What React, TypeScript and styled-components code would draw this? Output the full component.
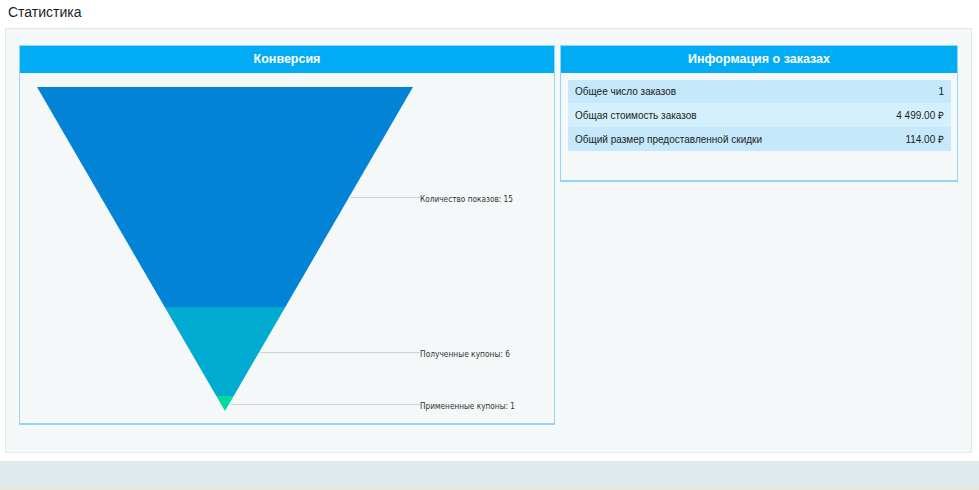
import React from 'react';
import styled, { createGlobalStyle } from 'styled-components';

const GlobalStyle = createGlobalStyle`
  html, body {
    margin: 0;
    padding: 0;
    background: #ffffff;
  }
  body {
    font-family: "Liberation Sans", Arial, sans-serif;
    color: #222;
  }
`;

const Page = styled.div`
  width: 979px;
  height: 490px;
  display: flex;
  flex-direction: column;
  overflow: hidden;
`;

const PageTitle = styled.h1`
  margin: 0;
  padding: 3px 8px 0;
  height: 25px;
  font-size: 14px;
  line-height: 18px;
  font-weight: normal;
  color: #1e1e1e;
`;

const Panel = styled.div`
  margin: 0 7px 0 5px;
  height: 426px;
  box-sizing: border-box;
  background: #f4f8f9;
  border: 1px solid #e0e9eb;
  padding: 16px 13px 0 13px;
  display: flex;
  align-items: flex-start;
  gap: 5px;
`;

const Card = styled.div<{ $width: number; $height: number }>`
  width: ${(p) => p.$width}px;
  height: ${(p) => p.$height}px;
  box-sizing: border-box;
  border: 1px solid #92d6f5;
  border-bottom-width: 2px;
  background: #f4f8f9;
  display: flex;
  flex-direction: column;
`;

const CardHeader = styled.div`
  height: 27px;
  flex-shrink: 0;
  background: #02acf4;
  color: #ffffff;
  font-weight: bold;
  font-size: 12.5px;
  display: flex;
  align-items: center;
  justify-content: center;
`;

const InfoTable = styled.div`
  margin: 7px 6px 0 7px;
  display: flex;
  flex-direction: column;
`;

const InfoRow = styled.div<{ $alt?: boolean }>`
  height: ${(p) => (p.$alt ? 24 : 23.5)}px;
  padding: 0 7px;
  display: flex;
  align-items: center;
  justify-content: space-between;
  background: ${(p) => (p.$alt ? '#d4f0fd' : '#c5e8fb')};
  font-size: 10px;
  color: #222;
`;

const Footer = styled.div`
  margin-top: 8px;
  height: 27px;
  background: #dfeaec;
  border-bottom: 2px solid #ebe5d6;
`;

const rows = [
  { label: 'Общее число заказов', value: '1' },
  { label: 'Общая стоимость заказов', value: '4 499.00 ₽' },
  { label: 'Общий размер предоставленной скидки', value: '114.00 ₽' },
];

// funnel geometry in chart coordinates
const TOP = 14;
const APEX_Y = 338;
const LEFT = 17;
const RIGHT = 393;
const APEX_X = 205;

const halfAt = (y: number) => ((APEX_Y - y) / (APEX_Y - TOP)) * ((RIGHT - LEFT) / 2);

const segments = [
  { from: TOP, to: 234, color: '#0283d5', label: 'Количество показов: 15', width: 93 },
  { from: 234, to: 323, color: '#01abcf', label: 'Полученные купоны: 6', width: 90 },
  { from: 323, to: APEX_Y, color: '#00d8a1', label: 'Примененные купоны: 1', width: 95 },
];

const Funnel: React.FC = () => (
  <svg width="534" height="348" viewBox="0 0 534 348">
    {segments.map((s) => {
      const h1 = halfAt(s.from);
      const h2 = halfAt(s.to);
      const pts =
        h2 > 0
          ? `${APEX_X - h1},${s.from} ${APEX_X + h1},${s.from} ${APEX_X + h2},${s.to} ${APEX_X - h2},${s.to}`
          : `${APEX_X - h1},${s.from} ${APEX_X + h1},${s.from} ${APEX_X},${s.to}`;
      const mid = Math.round((s.from + s.to) / 2);
      return (
        <g key={s.label}>
          <polygon points={pts} fill={s.color} />
          <line x1={APEX_X + halfAt(mid) + 1} y1={mid + 0.5} x2={400} y2={mid + 0.5} stroke="#cfd3d5" strokeWidth="1" />
          <text
            x={400}
            y={mid + 5}
            fontFamily='"DejaVu Sans", Verdana, sans-serif'
            fontSize="8.5"
            fill="#333"
            textLength={s.width}
            lengthAdjust="spacingAndGlyphs"
          >
            {s.label}
          </text>
        </g>
      );
    })}
  </svg>
);

export default function App() {
  return (
    <Page>
      <GlobalStyle />
      <PageTitle>Статистика</PageTitle>
      <Panel>
        <Card $width={536} $height={380}>
          <CardHeader>Конверсия</CardHeader>
          <Funnel />
        </Card>
        <Card $width={398} $height={137}>
          <CardHeader>Информация о заказах</CardHeader>
          <InfoTable>
            {rows.map((r, i) => (
              <InfoRow key={r.label} $alt={i === 1}>
                <span>{r.label}</span>
                <span>{r.value}</span>
              </InfoRow>
            ))}
          </InfoTable>
        </Card>
      </Panel>
      <Footer />
    </Page>
  );
}
